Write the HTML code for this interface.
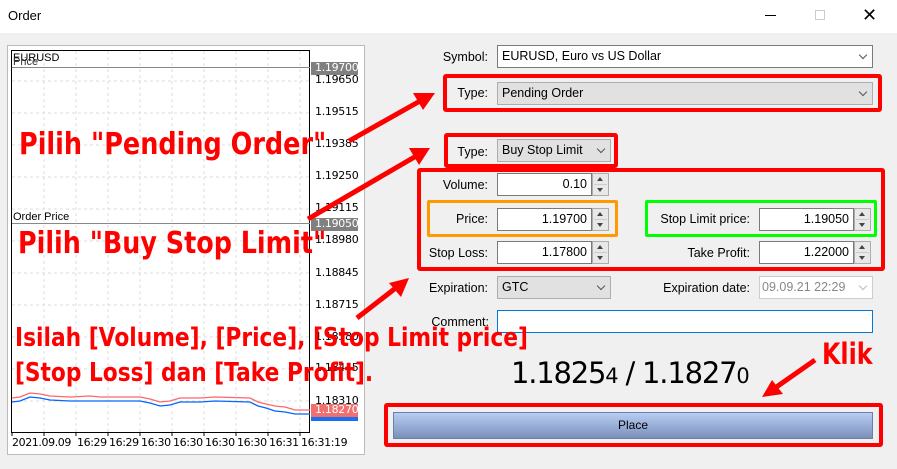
<!DOCTYPE html>
<html><head><meta charset="utf-8"><style>
*{margin:0;padding:0;box-sizing:border-box}
body{width:897px;height:469px;background:#f0f0f0;font-family:"Liberation Sans",sans-serif;font-size:12px;color:#000;position:relative;overflow:hidden}
.a{position:absolute}
.lbl{position:absolute;text-align:right;font-size:12.5px;line-height:14px}
.inp{position:absolute;background:#fff;border:1px solid #7a7a7a;height:23px;font-size:12.5px;line-height:21px;text-align:right;padding-right:4px}
.cmb{position:absolute;background:#e1e1e1;border:1px solid #adadad;height:23px;font-size:12.5px;line-height:21px;padding-left:4px}
.cmb i{position:absolute;right:6px;top:6px;width:6px;height:6px;border-right:1px solid #555;border-bottom:1px solid #555;transform:rotate(45deg)}
.sp{position:absolute;width:17px;height:23px;border:1px solid #adadad;background:#e8e8e8}
.sp:before{content:"";position:absolute;left:4px;top:3px;border:3.5px solid transparent;border-bottom:4px solid #444;border-top:0}
.sp:after{content:"";position:absolute;left:4px;bottom:3px;border:3.5px solid transparent;border-top:4px solid #444;border-bottom:0}
.sp b{position:absolute;left:1px;right:1px;top:10px;border-top:1px solid #ccc}
.rb{position:absolute;border:4px solid #f00;border-radius:3px}
.ax{position:absolute;left:315px;font-size:11px;font-family:"DejaVu Sans",sans-serif;letter-spacing:-0.3px}
.tx{position:absolute;top:436px;font-size:11px;font-family:"DejaVu Sans",sans-serif;letter-spacing:-0.4px;white-space:nowrap}
.ann{position:absolute;color:#f00;font-weight:bold;font-family:"DejaVu Sans","Liberation Sans",sans-serif;white-space:nowrap;transform-origin:left top}
</style></head><body>
<div class="a" style="left:0;top:0;width:897px;height:33px;background:#fff"></div>
<div class="a" style="left:8px;top:8px;font-size:13px">Order</div>
<div class="a" style="left:765px;top:15px;width:11px;border-top:1px solid #000"></div>
<div class="a" style="left:815px;top:10px;width:10px;height:10px;border:1px solid #ccc"></div>
<div class="a" style="left:862px;top:6px;font-size:18px;line-height:18px;font-weight:100">✕</div>

<!-- chart -->
<div class="a" style="left:7px;top:45px;width:358px;height:410px;border:1px solid #bbb;background:#fff"></div>
<svg class="a" style="left:0;top:0" width="380" height="469">
<g stroke="#ddd" stroke-dasharray="3,3" stroke-width="1">
<line x1="44" y1="51" x2="44" y2="432"/><line x1="76" y1="51" x2="76" y2="432"/><line x1="108" y1="51" x2="108" y2="432"/><line x1="140" y1="51" x2="140" y2="432"/><line x1="172" y1="51" x2="172" y2="432"/><line x1="204" y1="51" x2="204" y2="432"/><line x1="236" y1="51" x2="236" y2="432"/><line x1="268" y1="51" x2="268" y2="432"/><line x1="300" y1="51" x2="300" y2="432"/>
<line x1="12" y1="81" x2="310" y2="81"/><line x1="12" y1="113" x2="310" y2="113"/><line x1="12" y1="145" x2="310" y2="145"/><line x1="12" y1="177" x2="310" y2="177"/><line x1="12" y1="209" x2="310" y2="209"/><line x1="12" y1="241" x2="310" y2="241"/><line x1="12" y1="273" x2="310" y2="273"/><line x1="12" y1="305" x2="310" y2="305"/><line x1="12" y1="337" x2="310" y2="337"/><line x1="12" y1="369" x2="310" y2="369"/><line x1="12" y1="401" x2="310" y2="401"/>
</g>
<rect x="11.5" y="50.5" width="298" height="382" fill="none" stroke="#000"/>
<line x1="12" y1="67.5" x2="310" y2="67.5" stroke="#888"/>
<line x1="12" y1="223.5" x2="310" y2="223.5" stroke="#888"/>
<polyline fill="none" stroke="#f66" stroke-width="1.3" points="12,398 20,397 30,393 40,394 50,396 70,397 90,396 100,397 140,397 150,399 160,402 170,401 180,398 200,398 215,397 250,398 258,402 266,404 275,406 285,407 295,410 310,410"/>
<polyline fill="none" stroke="#06f" stroke-width="1.3" points="12,402 20,401 30,397 40,398 50,400 70,401 90,401 100,401 140,401 150,403 160,406 170,405 180,402 200,402 215,401 250,402 258,406 266,408 275,411 285,412 295,414 310,414"/>
<g stroke="#000"><line x1="12" y1="433" x2="12" y2="436"/><line x1="44" y1="433" x2="44" y2="436"/><line x1="76" y1="433" x2="76" y2="436"/><line x1="108" y1="433" x2="108" y2="436"/><line x1="140" y1="433" x2="140" y2="436"/><line x1="172" y1="433" x2="172" y2="436"/><line x1="204" y1="433" x2="204" y2="436"/><line x1="236" y1="433" x2="236" y2="436"/><line x1="268" y1="433" x2="268" y2="436"/><line x1="300" y1="433" x2="300" y2="436"/></g>
</svg>
<div class="a" style="left:13px;top:52px;font-size:11px">EURUSD</div>
<div class="a" style="left:13px;top:56px;font-size:11px;color:#333">Price</div>
<div class="a" style="left:13px;top:211px;font-size:11px">Order Price</div>
<div class="a" style="left:311px;top:62px;width:47px;height:13px;background:#808080"></div>
<div class="a" style="left:311px;top:218px;width:47px;height:13px;background:#808080"></div>
<div class="a" style="left:311px;top:412px;width:47px;height:9px;background:#1a6ef0"></div>
<div class="a" style="left:311px;top:404px;width:47px;height:13px;background:#f07070"></div>
<div class="ax" style="top:61px;color:#fff">1.19700</div>
<div class="ax" style="top:73px">1.19650</div>
<div class="ax" style="top:105px">1.19515</div>
<div class="ax" style="top:137px">1.19385</div>
<div class="ax" style="top:169px">1.19250</div>
<div class="ax" style="top:201px">1.19115</div>
<div class="ax" style="top:217px;color:#fff">1.19050</div>
<div class="ax" style="top:233px">1.18980</div>
<div class="ax" style="top:266px">1.18845</div>
<div class="ax" style="top:298px">1.18715</div>
<div class="ax" style="top:330px">1.18580</div>
<div class="ax" style="top:361px">1.18445</div>
<div class="ax" style="top:394px">1.18310</div>
<div class="ax" style="top:403px;color:#fff">1.18270</div>
<div class="tx" style="left:12px">2021.09.09</div>
<div class="tx" style="left:77px">16:29</div>
<div class="tx" style="left:109px">16:29</div>
<div class="tx" style="left:141px">16:30</div>
<div class="tx" style="left:173px">16:30</div>
<div class="tx" style="left:205px">16:30</div>
<div class="tx" style="left:237px">16:30</div>
<div class="tx" style="left:269px">16:31</div>
<div class="tx" style="left:301px">16:31:19</div>

<!-- form -->
<div class="lbl" style="left:420px;width:68px;top:50px">Symbol:</div>
<div class="inp" style="left:497px;top:45px;width:376px;text-align:left;padding-left:4px">EURUSD, Euro vs US Dollar<i style="position:absolute;right:6px;top:6px;width:6px;height:6px;border-right:1px solid #555;border-bottom:1px solid #555;transform:rotate(45deg)"></i></div>
<div class="lbl" style="left:420px;width:68px;top:86px">Type:</div>
<div class="cmb" style="left:497px;top:82px;width:376px">Pending Order<i></i></div>
<div class="lbl" style="left:420px;width:68px;top:145px">Type:</div>
<div class="cmb" style="left:497px;top:139px;width:114px">Buy Stop Limit<i></i></div>

<div class="lbl" style="left:400px;width:88px;top:178px">Volume:</div>
<div class="inp" style="left:497px;top:173px;width:95px">0.10</div><div class="sp" style="left:592px;top:173px"><b></b></div>
<div class="lbl" style="left:400px;width:88px;top:212px">Price:</div>
<div class="inp" style="left:497px;top:208px;width:95px">1.19700</div><div class="sp" style="left:592px;top:208px"><b></b></div>
<div class="lbl" style="left:400px;width:88px;top:246px">Stop Loss:</div>
<div class="inp" style="left:497px;top:241px;width:95px">1.17800</div><div class="sp" style="left:592px;top:241px"><b></b></div>
<div class="lbl" style="left:620px;width:130px;top:212px">Stop Limit price:</div>
<div class="inp" style="left:759px;top:208px;width:95px">1.19050</div><div class="sp" style="left:854px;top:208px"><b></b></div>
<div class="lbl" style="left:620px;width:130px;top:246px">Take Profit:</div>
<div class="inp" style="left:759px;top:241px;width:95px">1.22000</div><div class="sp" style="left:854px;top:241px"><b></b></div>
<div class="lbl" style="left:400px;width:88px;top:281px">Expiration:</div>
<div class="cmb" style="left:497px;top:276px;width:114px">GTC<i></i></div>
<div class="lbl" style="left:620px;width:130px;top:281px">Expiration date:</div>
<div class="inp" style="left:759px;top:276px;width:114px;text-align:left;padding-left:2px;color:#888;border-color:#ccc">09.09.21 22:29<i style="position:absolute;right:6px;top:6px;width:6px;height:6px;border-right:1px solid #bbb;border-bottom:1px solid #bbb;transform:rotate(45deg)"></i></div>
<div class="lbl" style="left:400px;width:89px;top:315px">Comment:</div>
<div class="inp" style="left:497px;top:310px;width:376px;border-color:#0078d7"></div>
<div class="a" style="left:511px;top:356px;font-size:29px;font-family:'DejaVu Sans',sans-serif;letter-spacing:-1.2px;white-space:nowrap">1.1825<span style="font-size:21px">4</span> / 1.1827<span style="font-size:21px">0</span></div>
<div class="a" style="left:393px;top:412px;width:480px;height:27px;border:1px solid #6d7fa8;background:linear-gradient(#b8cdf2,#7a90bb);text-align:center;line-height:25px;font-size:12px">Place</div>

<!-- red boxes -->
<div class="rb" style="left:443px;top:74px;width:439px;height:38px"></div>
<div class="rb" style="left:444px;top:133px;width:174px;height:35px"></div>
<div class="rb" style="left:417px;top:168px;width:468px;height:103px"></div>
<div class="a" style="left:427px;top:200px;width:191px;height:37px;border:3px solid #ff9900;border-radius:2px"></div>
<div class="a" style="left:645px;top:200px;width:232px;height:37px;border:3px solid #00ff00;border-radius:2px"></div>
<div class="rb" style="left:384px;top:403px;width:499px;height:44px"></div>

<!-- annotations -->
<div class="ann" style="left:19px;top:127px;font-size:30px;transform:scaleX(0.85)">Pilih "Pending Order"</div>
<div class="ann" style="left:18px;top:226px;font-size:30px;transform:scaleX(0.847)">Pilih "Buy Stop Limit"</div>
<div class="ann" style="left:15px;top:323px;font-size:26px;transform:scaleX(0.837)">Isilah [Volume], [Price], [Stop Limit price]</div>
<div class="ann" style="left:15px;top:358px;font-size:26px;transform:scaleX(0.835)">[Stop Loss] dan [Take Profit].</div>
<div class="ann" style="left:822px;top:337px;font-size:29px;transform:scaleX(0.82)">Klik</div>
<svg class="a" style="left:0;top:0" width="897" height="469">
<g stroke="#f00" stroke-width="5" fill="#f00">
<line x1="349" y1="141" x2="420" y2="101"/><polygon stroke="none" points="435,93 413,93 423,110"/>
<line x1="308" y1="219" x2="418" y2="155"/><polygon stroke="none" points="430,148 409,148 419,165"/>
<line x1="357" y1="318" x2="397" y2="287"/><polygon stroke="none" points="409,278 389,283 401,297"/>
<line x1="815" y1="360" x2="775" y2="388"/><polygon stroke="none" points="762,397 783,394 772,380"/>
</g></svg>
</body></html>
